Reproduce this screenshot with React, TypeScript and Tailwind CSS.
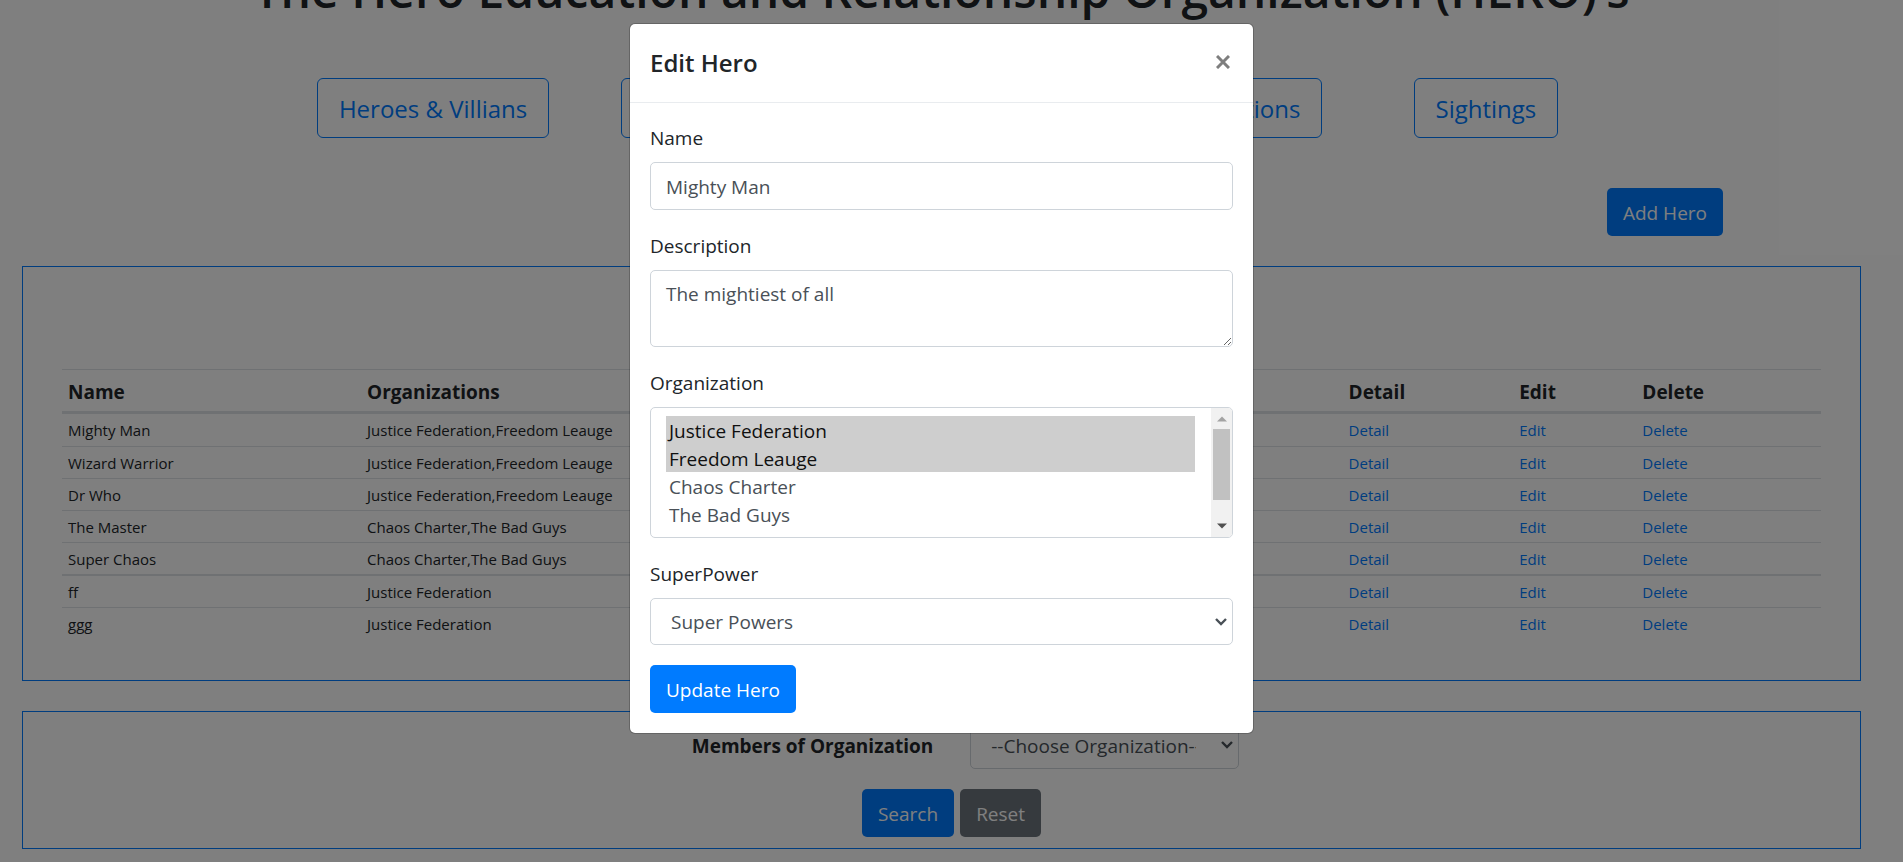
import type { ReactNode } from "react";

type Hero = { name: string; organizations: string };

const heroes: Hero[] = [
  { name: "Mighty Man", organizations: "Justice Federation,Freedom Leauge" },
  { name: "Wizard Warrior", organizations: "Justice Federation,Freedom Leauge" },
  { name: "Dr Who", organizations: "Justice Federation,Freedom Leauge" },
  { name: "The Master", organizations: "Chaos Charter,The Bad Guys" },
  { name: "Super Chaos", organizations: "Chaos Charter,The Bad Guys" },
];

const addedHeroes: Hero[] = [
  { name: "ff", organizations: "Justice Federation" },
  { name: "ggg", organizations: "Justice Federation" },
];

const navItems = ["Heroes & Villians", "Locations", "Superpowers", "Organizations", "Sightings"];
const organizations = ["Justice Federation", "Freedom Leauge", "Chaos Charter", "The Bad Guys"];

const control =
  "block w-full rounded-[5px] border border-[#ced4da] bg-white text-[19px] text-[#495057] outline-none";

function Chevron({ className }: { className: string }) {
  return (
    <svg viewBox="0 0 12 8" className={className} fill="none" aria-hidden="true">
      <path d="M1 1 6 6 11 1" stroke="currentColor" strokeWidth="2.4" />
    </svg>
  );
}

function Button({ children, tone = "bg-[#007bff]" }: { children: ReactNode; tone?: string }) {
  return (
    <button type="button" className={`h-12 rounded-[5px] px-4 pt-0.5 text-[19px] text-white ${tone}`}>
      {children}
    </button>
  );
}

function HeroRows({ rows, first }: { rows: Hero[]; first: string }) {
  return (
    <tbody>
      {rows.map((hero, i) => {
        const cell = `px-1.5 ${i === 0 ? first : "h-8 border-t border-[#dee2e6]"}`;
        return (
          <tr key={hero.name}>
            <td className={cell}>{hero.name}</td>
            <td className={cell}>{hero.organizations}</td>
            {["Detail", "Edit", "Delete"].map((action) => (
              <td key={action} className={cell}>
                <a href={`#${action.toLowerCase()}`} className="text-[#007bff]">
                  {action}
                </a>
              </td>
            ))}
          </tr>
        );
      })}
    </tbody>
  );
}

function Field({ id, label, children }: { id: string; label: string; children: ReactNode }) {
  return (
    <div className="mb-5">
      <label htmlFor={id} className="mb-2 block text-[19px] leading-8">
        {label}
      </label>
      {children}
    </div>
  );
}

function EditHeroModal() {
  return (
    <div
      role="dialog"
      aria-modal="true"
      aria-labelledby="edit-title"
      className="w-full max-w-[625px] self-start rounded-md border border-black/20 bg-white bg-clip-padding"
    >
      <div className="flex items-start justify-between border-b border-[#e9ecef] p-5">
        <h5 id="edit-title" className="text-[24px] leading-[38px] font-semibold">
          Edit Hero
        </h5>
        <button type="button" aria-label="Close" className="mt-2 flex size-5 items-center justify-center text-black opacity-50">
          <svg viewBox="0 0 14 14" className="size-3.5" aria-hidden="true">
            <path d="M1 1 13 13M13 1 1 13" stroke="currentColor" strokeWidth="3" />
          </svg>
        </button>
      </div>
      <form className="px-5 pt-[19px] pb-5">
        <Field id="name" label="Name">
          <input id="name" type="text" defaultValue="Mighty Man" className={`${control} h-12 px-[15px] pt-0.5`} />
        </Field>
        <Field id="description" label="Description">
          <textarea
            id="description"
            defaultValue="The mightiest of all"
            className={`${control} h-[77px] resize-y px-[15px] py-2 leading-[30px]`}
          />
        </Field>
        <Field id="organization" label="Organization">
          <div className="relative">
            <select
              id="organization"
              multiple
              defaultValue={["Justice Federation", "Freedom Leauge"]}
              className={`${control} h-[131px] overflow-hidden py-2 pr-[37px] pl-[15px]`}
            >
              {organizations.map((name) => (
                <option key={name} className="h-7 px-[3px] pt-0.5 pb-0 leading-7">
                  {name}
                </option>
              ))}
            </select>
            <div className="absolute inset-y-px right-px flex w-[21px] flex-col items-center rounded-r-[4px] bg-[#f1f1f1]">
              <svg viewBox="0 0 10 6" className="mt-2 h-1.5 w-2.5" aria-hidden="true">
                <path d="M0 5.5 5 0.5 10 5.5Z" fill="#a3a3a3" />
              </svg>
              <div className="mt-[7px] h-[71px] w-[17px] bg-[#c1c1c1]" />
              <svg viewBox="0 0 10 6" className="mt-auto mb-2 h-1.5 w-2.5" aria-hidden="true">
                <path d="M0 0.5 5 5.5 10 0.5Z" fill="#505050" />
              </svg>
            </div>
          </div>
        </Field>
        <Field id="superpower" label="SuperPower">
          <div className="relative">
            <select id="superpower" className={`${control} h-[47px] appearance-none pt-0.5 pr-8 pl-5`}>
              <option>Super Powers</option>
            </select>
            <Chevron className="pointer-events-none absolute top-5 right-1.5 h-2 w-3 text-[#495057]" />
          </div>
        </Field>
        <Button>Update Hero</Button>
      </form>
    </div>
  );
}

export default function App() {
  return (
    <div className="relative h-screen overflow-hidden bg-white font-['Open_Sans',sans-serif] text-[#212529]">
      <main className="pr-5">
        <h1 className="-mt-10 text-center text-[48px] leading-[60px] font-semibold whitespace-nowrap">
          The Hero Education and Relationship Organization (HERO)&#8217;s
        </h1>
        <nav className="mx-auto mt-[58px] w-full max-w-[1352px] pl-9">
          <ul className="grid grid-cols-5 justify-items-center">
            {navItems.map((item) => (
              <li key={item}>
                <a
                  href="#nav"
                  className="flex h-[60px] items-center rounded-md border border-[#007bff] px-[21px] pt-0.5 text-[24px] whitespace-nowrap text-[#007bff]"
                >
                  {item}
                </a>
              </li>
            ))}
          </ul>
        </nav>
        <div className="mt-[50px] flex justify-end pr-40">
          <Button>Add Hero</Button>
        </div>

        <section className="mx-[22px] mt-[30px] border border-[#007bff] px-[39px] pb-[41px]">
          <h2 className="h-[102px] pt-6 text-center text-[32px] font-medium">Heroes</h2>
          <table className="w-full table-fixed border-separate border-spacing-0 text-[15px] leading-5">
            <colgroup>
              <col className="w-[17%]" />
              <col />
              <col className="w-[9.7%]" />
              <col className="w-[7%]" />
              <col className="w-[10.5%]" />
            </colgroup>
            <thead>
              <tr className="text-left text-[19px]">
                {["Name", "Organizations", "Detail", "Edit", "Delete"].map((title) => (
                  <th
                    key={title}
                    scope="col"
                    className="h-[45px] border-t border-b-3 border-[#dee2e6] px-1.5 pt-0.5 font-bold"
                  >
                    {title}
                  </th>
                ))}
              </tr>
            </thead>
            <HeroRows rows={heroes} first="h-8" />
            <HeroRows rows={addedHeroes} first="h-[33px] border-t-2 border-[#dee2e6]" />
          </table>
        </section>

        <section className="mx-[22px] mt-[30px] flex flex-col items-center border border-[#007bff] pt-[9px] pb-[11px]">
          <div className="ml-12 flex items-center gap-[37px]">
            <label htmlFor="members" className="pt-0.5 text-[19px] font-bold">
              Members of Organization
            </label>
            <div className="relative w-[269px]">
              <select id="members" className={`${control} h-12 appearance-none pt-0.5 pr-[42px] pl-5`}>
                <option>--Choose Organization--</option>
              </select>
              <Chevron className="pointer-events-none absolute top-5 right-1.5 h-2 w-3 text-[#495057]" />
            </div>
          </div>
          <div className="mt-5 ml-5 flex gap-1.5">
            <Button>Search</Button>
            <Button tone="bg-[#6c757d]">Reset</Button>
          </div>
        </section>
      </main>

      <div className="absolute inset-0 flex justify-center bg-black/50 pt-[23px] pr-5">
        <EditHeroModal />
      </div>
    </div>
  );
}
